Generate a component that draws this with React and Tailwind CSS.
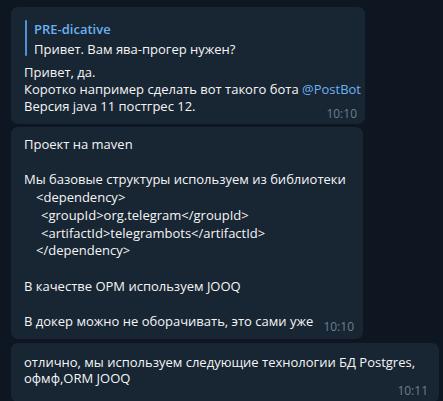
export default function App() {
  const font = { fontFamily: '"Open Sans", "Noto Sans", sans-serif' };
  return (
    <div
      className="w-[443px] h-[401px] bg-[#0e1621] overflow-hidden flex flex-col gap-[3px] pt-[7px] pl-[11px] text-[13px] text-[#f5f5f5]"
      style={font}
    >
      {/* bubble 1 */}
      <div className="relative w-[354px] rounded-[7px] bg-[#182533] pt-[13px] pb-[9px] pl-[13px] pr-[10px] leading-[17px]">
        <div className="flex items-start gap-[7px] pl-[1px]">
          <div className="w-[2px] h-[36px] rounded-full bg-[#4f93d6]" />
          <div className="flex flex-col">
            <span className="font-semibold text-[#6ab2f2] leading-[18px]">PRE-dicative</span>
            <span className="mt-[2px] leading-[18px]">Привет. Вам ява-прогер нужен?</span>
          </div>
        </div>
        <div className="mt-[6px] whitespace-nowrap">
          <div>Привет, да.</div>
          <div>
            Коротко например сделать вот такого бота{" "}
            <span className="text-[#6ab3f3]">@PostBot</span>
          </div>
          <div>Версия java 11 постгрес 12.</div>
        </div>
        <span className="absolute right-[8px] bottom-[2px] text-[12px] text-[#6d7f8f]">10:10</span>
      </div>

      {/* bubble 2 */}
      <div className="relative w-[352px] rounded-[7px] bg-[#182533] pt-[9px] pb-[8px] pl-[13px] pr-[10px] leading-[17.7px] whitespace-nowrap">
        <div>Проект на maven</div>
        <div>&nbsp;</div>
        <div>Мы базовые структуры используем из библиотеки</div>
        <div className="pl-[12px]">&lt;dependency&gt;</div>
        <div className="pl-[17px]">&lt;groupId&gt;org.telegram&lt;/groupId&gt;</div>
        <div className="pl-[17px]">&lt;artifactId&gt;telegrambots&lt;/artifactId&gt;</div>
        <div className="pl-[12px]">&lt;/dependency&gt;</div>
        <div>&nbsp;</div>
        <div>В качестве ОРМ используем JOOQ</div>
        <div>&nbsp;</div>
        <div>В докер можно не оборачивать, это сами уже</div>
        <span className="absolute right-[9px] bottom-[3px] text-[12px] text-[#6d7f8f]">10:10</span>
      </div>

      {/* bubble 3 */}
      <div className="relative mt-[1px] w-[428px] rounded-[7px] bg-[#182533] pt-[11px] pb-[15px] pl-[13px] pr-[10px] leading-[16.5px] whitespace-nowrap">
        <div>отлично, мы используем следующие технологии БД Postgres,</div>
        <div>офмф,ORM JOOQ</div>
        <span className="absolute right-[11px] bottom-[2px] text-[12px] text-[#6d7f8f]">10:11</span>
      </div>
    </div>
  );
}
